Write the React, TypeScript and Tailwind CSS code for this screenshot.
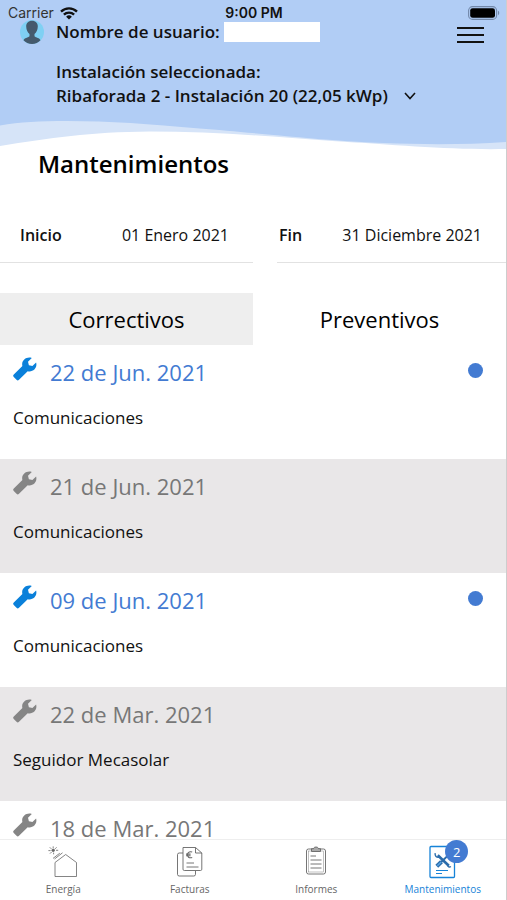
import { ReactNode, useState } from "react";

type Maintenance = {
  date: string;
  description?: string;
  open: boolean;
};

const maintenances: Maintenance[] = [
  { date: "22 de Jun. 2021", description: "Comunicaciones", open: true },
  { date: "21 de Jun. 2021", description: "Comunicaciones", open: false },
  { date: "09 de Jun. 2021", description: "Comunicaciones", open: true },
  { date: "22 de Mar. 2021", description: "Seguidor Mecasolar", open: false },
  { date: "18 de Mar. 2021", open: false },
];

function WifiIcon() {
  return (
    <svg viewBox="0 0 18 13" className="h-[13px] w-[18px]" fill="none" stroke="#111" strokeWidth="2.4" aria-hidden="true">
      <path d="M1 4.6a11.6 11.6 0 0 1 16 0" />
      <path d="M3.9 7.7a7.4 7.4 0 0 1 10.2 0" />
      <path d="M9 12.6 6.1 9.7a4.2 4.2 0 0 1 5.8 0Z" fill="#111" stroke="none" />
    </svg>
  );
}

function BatteryIcon() {
  return (
    <svg viewBox="0 0 32 14" className="h-[14px] w-8" aria-hidden="true">
      <rect x="0.6" y="0.6" width="28" height="12.8" rx="4" fill="none" stroke="#7288aa" strokeWidth="1.1" />
      <rect x="2.2" y="2.2" width="24.8" height="9.6" rx="2.4" fill="#000" />
      <path d="M30 4.8c1.6.5 1.6 3.9 0 4.4Z" fill="#7288aa" />
    </svg>
  );
}

function AvatarIcon() {
  return (
    <svg viewBox="0 0 24 24" className="size-6" aria-hidden="true">
      <circle cx="12" cy="12" r="12" fill="#7fd0f3" />
      <path
        d="M12 .8c-3.7 0-5.9 2.4-5.8 5.8.1 3.4 1.5 6 3.3 7.5v2.2c-1.6 1.5-5.1 1.6-6 3.9C5.6 22.6 8.6 24 12 24s6.4-1.4 8.500-3.8c-.9-2.3-4.4-2.4-6-3.9v-2.2c1.8-1.5 3.2-4.1 3.3-7.5C17.9 3.2 15.7.8 12 .8Z"
        fill="#455a6c"
      />
    </svg>
  );
}

function WrenchIcon({ className }: { className: string }) {
  return (
    <svg viewBox="0 0 24 24" className={className} fill="currentColor" aria-hidden="true">
      <path d="M18.800.9C13.500-.9 7.900 3.400 9.400 9L.8 17.500c-.9.9-.9 1.600 0 2.500l2.700 2.700c.9.900 1.600.9 2.500 0l8.700-8.500c5.500 1.200 9.900-3.400 8.400-8.800L19.400 9l-3.500-.8-.9-3.500Z" />
    </svg>
  );
}

function Wave() {
  return (
    <svg viewBox="0 0 507 44" preserveAspectRatio="none" className="block h-11 w-full" aria-hidden="true">
      <path d="M0 0H507V41C450 42 400 37 333 33C267 28 210 23.5 150 23.5C90 24 50 30 0 38Z" fill="#d6e4f8" />
      <path d="M0 0H507V34C450 38 385 36 333 32C270 27 235 23 200 20.5C150 16 110 13 67 13C40 13 20 14 0 17.5Z" fill="#b1cdf5" />
    </svg>
  );
}

function EnergyIcon() {
  return (
    <svg viewBox="0 0 30 32" className="h-8 w-[30px]" fill="none" stroke="currentColor" strokeWidth="0.8" aria-hidden="true">
      <path d="M7 16.5V30.5h21.5V16.5L17.7 8.5Z" />
      <path d="M6.500 13 14.500 6.800M5 12.400 11.800 7.200" />
      <circle cx="5.2" cy="4.3" r="1.3" fill="currentColor" />
      <path d="M5.200 2V.4M7 2.900l1.600-1.600M8 4.300h2.200M3.400 2.900 1.800 1.300M2.600 4.600H.4M3.600 6 2 7.600M5.600 6.600v1.700" />
    </svg>
  );
}

function InvoicesIcon() {
  return (
    <svg viewBox="0 0 27 32" className="h-8 w-[27px]" fill="none" stroke="currentColor" strokeWidth="0.9" aria-hidden="true">
      <path d="M7 7H3.200A1.700 1.700 0 0 0 1.500 8.700v19.600A1.700 1.700 0 0 0 3.200 30h14.600a1.700 1.700 0 0 0 1.700-1.700V25" />
      <path d="M7 1.500h12.500l6.300 5.500v16.200A1.300 1.300 0 0 1 24.500 24.500H8.300A1.300 1.300 0 0 1 7 23.200ZM19.500 1.500V7h6.300" />
      <path d="M16.200 6.100c-3.300-1.100-4.800 1-4.800 2.700s1.500 3.800 4.800 2.700M10 8.100h4.600M10 9.700h4.600" strokeWidth="1.1" />
      <path d="M10.500 17h7.500M10.500 21h12" />
    </svg>
  );
}

function ReportsIcon() {
  return (
    <svg viewBox="0 0 22 32" className="h-8 w-[22px]" fill="none" stroke="currentColor" strokeWidth="0.9" aria-hidden="true">
      <rect x="1.5" y="3" width="19" height="25" rx="2" />
      <rect x="3.5" y="5" width="15" height="21" strokeWidth="0.4" />
      <path d="M6.500 5.500V2.700h2C8.700.5 13.300.5 13.500 2.700h2v2.800Z" fill="#aaa" />
      <path d="M5.500 10h5.500M5.500 14h11M5.500 18h11M5.500 22h11" />
    </svg>
  );
}

function MaintenanceIcon() {
  return (
    <svg viewBox="0 0 27 34" className="h-[34px] w-[27px]" fill="none" stroke="currentColor" strokeWidth="1.3" aria-hidden="true">
      <rect x="1" y="1.5" width="24.5" height="31" rx="1" />
      <path d="m8.800 10.200 11 10.600" stroke="#2b6cab" strokeWidth="2.6" />
      <path d="M6.200 8.200c-.6 2.600 1.400 4.600 4 3.900M18.300 19.500c.4 2.600 2.200 3 3.600 2" stroke="#2b6cab" strokeWidth="1.4" />
      <path d="m20 9.500-8.300 8" stroke="#2b6cab" strokeWidth="1.8" />
      <path d="m12.500 16.700-4.700 4.600" stroke="#2b6cab" strokeWidth="4" />
      <path d="m12.300 16.900-4 3.900" stroke="#5aa5e4" strokeWidth="1.4" />
      <path d="M7 25.500h12M7 28.500h6" strokeWidth="1" />
    </svg>
  );
}

function NavItem({ label, icon, active, badge }: { label: string; icon: ReactNode; active?: boolean; badge?: number }) {
  return (
    <a
      href="#"
      aria-current={active ? "page" : undefined}
      className={`flex flex-1 flex-col items-center pt-1 text-[10px] leading-[18px] ${active ? "text-[#1683d8]" : "text-[#666]"}`}
    >
      <span className="relative flex h-9 items-center">
        {icon}
        {badge && (
          <span className="absolute -top-1 left-4 flex size-[23px] items-center justify-center rounded-full bg-[#437bd2] text-[13px] text-white">
            {badge}
          </span>
        )}
      </span>
      {label}
    </a>
  );
}

export default function App() {
  const [tab, setTab] = useState("Correctivos");

  return (
    <div className="flex h-dvh flex-col border-r border-[#cdcdcd] bg-white font-['Open_Sans',sans-serif] text-[#111]">
      <header>
        <div className="bg-[#b1cdf5]">
          <div className="grid h-5 grid-cols-3 items-end pr-1.5 pl-2 font-[Inter,sans-serif] text-sm leading-3.5">
            <span className="flex items-center gap-1.5 text-[#333]">
              Carrier <WifiIcon />
            </span>
            <span className="text-center font-semibold">9:00 PM</span>
            <span className="flex justify-end">
              <BatteryIcon />
            </span>
          </div>
          <div className="flex items-start pr-[22px] pl-5">
            <AvatarIcon />
            <div className="ml-3 min-w-0 flex-1 text-[17px] leading-6 font-semibold">
              <div className="flex items-center gap-1">
                Nombre de usuario:
                <span className="h-5 w-24 bg-white" />
              </div>
              <label htmlFor="installation" className="mt-4 block">
                Instalación seleccionada:
              </label>
              <div className="relative w-fit">
                <select id="installation" className="block appearance-none bg-transparent pr-8 outline-none">
                  <option>Ribaforada 2 - Instalación 20 (22,05 kWp)</option>
                </select>
                <svg
                  viewBox="0 0 12 8"
                  className="pointer-events-none absolute top-2 right-1 h-2 w-3"
                  fill="none"
                  stroke="currentColor"
                  strokeWidth="1.6"
                  aria-hidden="true"
                >
                  <path d="m1 1 5 5.500L11 1" />
                </svg>
              </div>
            </div>
            <button aria-label="Menú" className="mt-[7px] flex flex-col gap-[5px]">
              <span className="h-0.5 w-[27px] bg-[#111]" />
              <span className="h-0.5 w-[27px] bg-[#111]" />
              <span className="h-0.5 w-[27px] bg-[#111]" />
            </button>
          </div>
        </div>
        <Wave />
      </header>

      <h1 className="pl-[38px] text-2xl leading-6 font-semibold text-black">Mantenimientos</h1>

      <div className="mt-8 flex">
        <div className="w-1/2">
          <button className="flex h-[55px] w-full items-center justify-between border-b border-[#e2e2e2] pr-6 pl-5">
            <span className="text-base font-semibold">Inicio</span>
            <span className="text-base">01 Enero 2021</span>
          </button>
        </div>
        <div className="w-1/2 pl-6">
          <button className="flex h-[55px] w-full items-center justify-between border-b border-[#e2e2e2] pr-6 pl-0.5">
            <span className="text-base font-semibold">Fin</span>
            <span className="text-base">31 Diciembre 2021</span>
          </button>
        </div>
      </div>

      <div role="tablist" className="mt-[30px] flex">
        {["Correctivos", "Preventivos"].map((name) => (
          <button
            key={name}
            role="tab"
            aria-selected={tab === name}
            onClick={() => setTab(name)}
            className={`h-13 w-1/2 text-[22px] text-black ${tab === name ? "bg-[#eee]" : "bg-white"}`}
          >
            {name}
          </button>
        ))}
      </div>

      <ul className="min-h-0 flex-1 overflow-y-auto [scrollbar-width:none]">
        {maintenances.map((item) => (
          <li key={item.date} className={`px-[13px] pt-3 ${item.open ? "bg-white" : "bg-[#e9e7e8] last:bg-white"}`}>
            <div className={`flex items-start ${item.open ? "text-[#437bd2]" : "text-[#777]"}`}>
              <WrenchIcon className={`size-6 ${item.open ? "text-[#0a80da]" : "text-[#858585]"}`} />
              <span className="ml-[13px] flex-1 text-[22px] leading-[30px]">{item.date}</span>
              {item.open && <span className="mt-1.5 mr-2.5 size-[15px] rounded-full bg-[#437bd2]" />}
            </div>
            {item.description && <p className="mt-[19px] pb-[29px] text-[17px] leading-6">{item.description}</p>}
          </li>
        ))}
      </ul>

      <nav className="flex h-[61px] border-t border-[#eee] bg-white">
        <NavItem label="Energía" icon={<EnergyIcon />} />
        <NavItem label="Facturas" icon={<InvoicesIcon />} />
        <NavItem label="Informes" icon={<ReportsIcon />} />
        <NavItem label="Mantenimientos" icon={<MaintenanceIcon />} active badge={2} />
      </nav>
    </div>
  );
}
